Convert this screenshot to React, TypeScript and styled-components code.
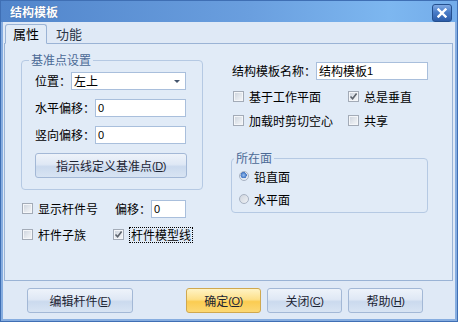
import React from 'react';
import styled, { createGlobalStyle } from 'styled-components';

const Global = createGlobalStyle`
  html, body { margin: 0; padding: 0; }
  body {
    font-family: "Noto Sans CJK SC", sans-serif;
    font-size: 12px;
    color: #000;
    background: #dfe9f6;
  }
  * { box-sizing: border-box; }
`;

const Window = styled.div`
  width: 458px;
  height: 322px;
  border: 1px solid #3f6fb4;
  background: #86ade0;
  display: flex;
  flex-direction: column;
`;

const TitleBar = styled.div`
  height: 21px;
  flex: none;
  display: flex;
  align-items: center;
  padding: 0 5px 0 9px;
  background: linear-gradient(90deg, #5185cb 0%, #6a9fdf 55%, #7db7f0 85%, #73acea 100%);
`;

const Title = styled.div`
  flex: 1;
  color: #fff;
  font-weight: bold;
  font-size: 12px;
  line-height: 16px;
  text-shadow: 0 0 1px rgba(20, 50, 100, 0.6);
`;

const CloseButton = styled.div`
  width: 20px;
  height: 18px;
  border: 1px solid #24508f;
  border-radius: 3px;
  background: linear-gradient(180deg, #7fa9e3 0%, #4a7dc8 45%, #2c5ca8 100%);
  display: flex;
  align-items: center;
  justify-content: center;
  margin-top: 2px;
`;

const Body = styled.div`
  flex: 1;
  margin: 0 2px 2px 2px;
  background: #dfe9f6;
  padding: 0 2px 0 1px;
  display: flex;
  flex-direction: column;
`;

const TabStrip = styled.div`
  height: 21px;
  flex: none;
  display: flex;
  align-items: flex-end;
  padding-left: 1px;
  position: relative;
  z-index: 1;
`;

const Tab = styled.div<{ $active?: boolean }>`
  height: ${p => (p.$active ? '20px' : '18px')};
  width: ${p => (p.$active ? '42px' : '44px')};
  margin-bottom: ${p => (p.$active ? '-1px' : '0')};
  display: flex;
  align-items: center;
  justify-content: center;
  font-size: 13px;
  line-height: 16px;
  color: ${p => (p.$active ? '#000' : '#2a3548')};
  border: ${p => (p.$active ? '1px solid #9ab3d5' : '1px solid transparent')};
  border-bottom: ${p => (p.$active ? '1px solid #e1ebf7' : '1px solid transparent')};
  border-radius: 3px 3px 0 0;
  background: ${p => (p.$active ? '#e1ebf7' : 'transparent')};
`;

const Panel = styled.div`
  height: 238px;
  flex: none;
  border: 1px solid #9ab3d5;
  background: #e1ebf7;
  display: flex;
  padding: 8px 0 0 16px;
`;

const LeftCol = styled.div`
  width: 182px;
  display: flex;
  flex-direction: column;
`;

const RightCol = styled.div`
  width: 197px;
  margin-left: 28px;
  padding-top: 10px;
  display: flex;
  flex-direction: column;
`;

const Group = styled.fieldset<{ $pl: number; $pb: number; $pt: number; $mt?: number }>`
  margin: ${p => p.$mt || 0}px 0 0 0;
  min-width: 0;
  border: 1px solid #b5c9e3;
  border-radius: 4px;
  padding: ${p => `${p.$pt}px 0 ${p.$pb}px ${p.$pl}px`};
  display: flex;
  flex-direction: column;
`;

const Legend = styled.legend<{ $ml: number }>`
  padding: 0 2px;
  margin-left: ${p => p.$ml}px;
  line-height: 16px;
  font-size: 12px;
  color: #4b6a96;
`;

const GroupBody = styled.div<{ $gap: number }>`
  display: flex;
  flex-direction: column;
  gap: ${p => p.$gap}px;
`;

const FieldRow = styled.div<{ $w?: number }>`
  display: flex;
  align-items: center;
  height: 18px;
  width: ${p => (p.$w ? `${p.$w}px` : 'auto')};
  white-space: nowrap;
`;

const Label = styled.span<{ $pl?: number }>`
  line-height: 16px;
  padding-left: ${p => p.$pl || 0}px;
`;

const TextBox = styled.div<{ $w: number }>`
  width: ${p => p.$w}px;
  height: 18px;
  margin-left: auto;
  background: #fff;
  border: 1px solid #a9bfdc;
  padding-left: 2px;
  display: flex;
  align-items: center;
  font-family: "Liberation Sans", "Noto Sans CJK SC", sans-serif;
  font-size: 11px;
  line-height: 14px;
`;

const TextBoxCJK = styled(TextBox)`
  font-family: "Noto Sans CJK SC", sans-serif;
  font-size: 12px;
`;

const Combo = styled(TextBoxCJK)`
  justify-content: space-between;
  padding-right: 5px;
  font-size: 12px;
`;

const Arrow = styled.span`
  width: 0;
  height: 0;
  border-left: 3px solid transparent;
  border-right: 3px solid transparent;
  border-top: 3px solid #44546c;
`;

const Button = styled.div<{ $w: number; $primary?: boolean; $ml?: number }>`
  width: ${p => p.$w}px;
  height: 25px;
  flex: none;
  margin-left: ${p => p.$ml || 0}px;
  border: 1px solid ${p => (p.$primary ? '#d0a84e' : '#a3b8d6')};
  border-radius: 3px;
  background: ${p =>
    p.$primary
      ? 'linear-gradient(180deg, #fff3c4 0%, #fde08a 45%, #fbcc52 55%, #fcd874 100%)'
      : 'linear-gradient(180deg, #eef3fa 0%, #dfe8f5 45%, #cbdaee 55%, #d8e4f3 100%)'};
  display: flex;
  align-items: center;
  justify-content: center;
  font-size: 12px;
  line-height: 16px;
  color: #1c2433;
  white-space: nowrap;
`;

const Mnemonic = styled.span`
  font-family: "Liberation Sans", sans-serif;
  font-size: 11px;
  letter-spacing: -0.5px;
  u { text-decoration-thickness: 1px; text-underline-offset: 1px; }
`;

const CheckGrid = styled.div<{ $cols: string; $gap: number; $mt: number; $pl: number }>`
  display: grid;
  grid-template-columns: ${p => p.$cols};
  row-gap: ${p => p.$gap}px;
  margin-top: ${p => p.$mt}px;
  padding-left: ${p => p.$pl}px;
  align-items: center;
`;

const CheckItem = styled.div<{ $h?: number }>`
  display: flex;
  align-items: center;
  height: ${p => p.$h || 16}px;
  gap: 5px;
  white-space: nowrap;
`;

const Box = styled.span`
  width: 11px;
  height: 11px;
  flex: none;
  border: 1px solid #a3abb7;
  background: linear-gradient(135deg, #cbd2dc 0%, #e6eaef 60%, #f6f7f9 100%);
  box-shadow: inset 0 0 0 1px #f4f6f9;
  display: flex;
  align-items: center;
  justify-content: center;
`;

const Focus = styled.span`
  border: 1px dotted #000;
  padding: 0 1px;
  line-height: 14px;
`;

const RadioDot = styled.span<{ $on?: boolean }>`
  width: 10px;
  height: 10px;
  flex: none;
  border-radius: 50%;
  border: 1px solid #a8b2c2;
  background: ${p =>
    p.$on
      ? 'radial-gradient(circle at 45% 40%, #9cc2f0 0%, #3d72c2 45%, #dfe6ef 50%, #f4f6f9 100%)'
      : 'linear-gradient(135deg, #cfd5de 0%, #eef1f5 100%)'};
`;

const Footer = styled.div`
  flex: 1;
  display: flex;
  align-items: flex-start;
  padding: 7px 0 0 23px;
  gap: 6px;
`;

const Check = ({ on }: { on?: boolean }) => (
  <Box>
    {on && (
      <svg width="9" height="9" viewBox="0 0 9 9">
        <path d="M1.5 4.5 L3.6 6.8 L7.6 1.6" fill="none" stroke="#5d636c" strokeWidth="1.6" />
      </svg>
    )}
  </Box>
);

const Mn = ({ k }: { k: string }) => (
  <Mnemonic>
    (<u>{k}</u>)
  </Mnemonic>
);

export default function App() {
  return (
    <>
      <Global />
      <Window>
        <TitleBar>
          <Title>结构模板</Title>
          <CloseButton>
            <svg width="10" height="10" viewBox="0 0 10 10">
              <path d="M1.5 1.5 L8.5 8.5 M8.5 1.5 L1.5 8.5" stroke="#fff" strokeWidth="2.4" strokeLinecap="square" />
            </svg>
          </CloseButton>
        </TitleBar>
        <Body>
          <TabStrip>
            <Tab $active>属性</Tab>
            <Tab>功能</Tab>
          </TabStrip>
          <Panel>
            <LeftCol>
              <Group $pl={13} $pb={11} $pt={4}>
                <Legend $ml={-6}>基准点设置</Legend>
                <GroupBody $gap={9}>
                  <FieldRow $w={151}>
                    <Label>位置：</Label>
                    <Combo $w={116}>
                      <span>左上</span>
                      <Arrow />
                    </Combo>
                  </FieldRow>
                  <FieldRow $w={151}>
                    <Label>水平偏移：</Label>
                    <TextBox $w={94}>0</TextBox>
                  </FieldRow>
                  <FieldRow $w={151}>
                    <Label>竖向偏移：</Label>
                    <TextBox $w={94}>0</TextBox>
                  </FieldRow>
                  <Button $w={152}>
                    指示线定义基准点<Mn k="D" />
                  </Button>
                </GroupBody>
              </Group>
              <CheckGrid $cols="91px 1fr" $gap={7} $mt={9} $pl={1}>
                <CheckItem $h={19}>
                  <Check />
                  <span>显示杆件号</span>
                </CheckItem>
                <FieldRow $w={73}>
                  <Label $pl={2}>偏移：</Label>
                  <TextBox $w={35}>0</TextBox>
                </FieldRow>
                <CheckItem $h={19}>
                  <Check />
                  <span>杆件子族</span>
                </CheckItem>
                <CheckItem $h={19}>
                  <Check on />
                  <Focus>杆件模型线</Focus>
                </CheckItem>
              </CheckGrid>
            </LeftCol>
            <RightCol>
              <FieldRow>
                <Label $pl={1}>结构模板名称：</Label>
                <TextBoxCJK $w={114}>
                  结构模板<Mnemonic>1</Mnemonic>
                </TextBoxCJK>
              </FieldRow>
              <CheckGrid $cols="115px 1fr" $gap={8} $mt={8} $pl={2}>
                <CheckItem>
                  <Check />
                  <span>基于工作平面</span>
                </CheckItem>
                <CheckItem>
                  <Check on />
                  <span>总是垂直</span>
                </CheckItem>
                <CheckItem>
                  <Check />
                  <span>加载时剪切空心</span>
                </CheckItem>
                <CheckItem>
                  <Check />
                  <span>共享</span>
                </CheckItem>
              </CheckGrid>
              <Group $pl={7} $pb={5} $pt={2} $mt={22}>
                <Legend $ml={-5}>所在面</Legend>
                <GroupBody $gap={7}>
                  <CheckItem>
                    <RadioDot $on />
                    <span>铅直面</span>
                  </CheckItem>
                  <CheckItem>
                    <RadioDot />
                    <span>水平面</span>
                  </CheckItem>
                </GroupBody>
              </Group>
            </RightCol>
          </Panel>
          <Footer>
            <Button $w={106}>
              编辑杆件<Mn k="E" />
            </Button>
            <Button $w={75} $primary $ml={47}>
              确定<Mn k="O" />
            </Button>
            <Button $w={75}>
              关闭<Mn k="C" />
            </Button>
            <Button $w={75}>
              帮助<Mn k="H" />
            </Button>
          </Footer>
        </Body>
      </Window>
    </>
  );
}
